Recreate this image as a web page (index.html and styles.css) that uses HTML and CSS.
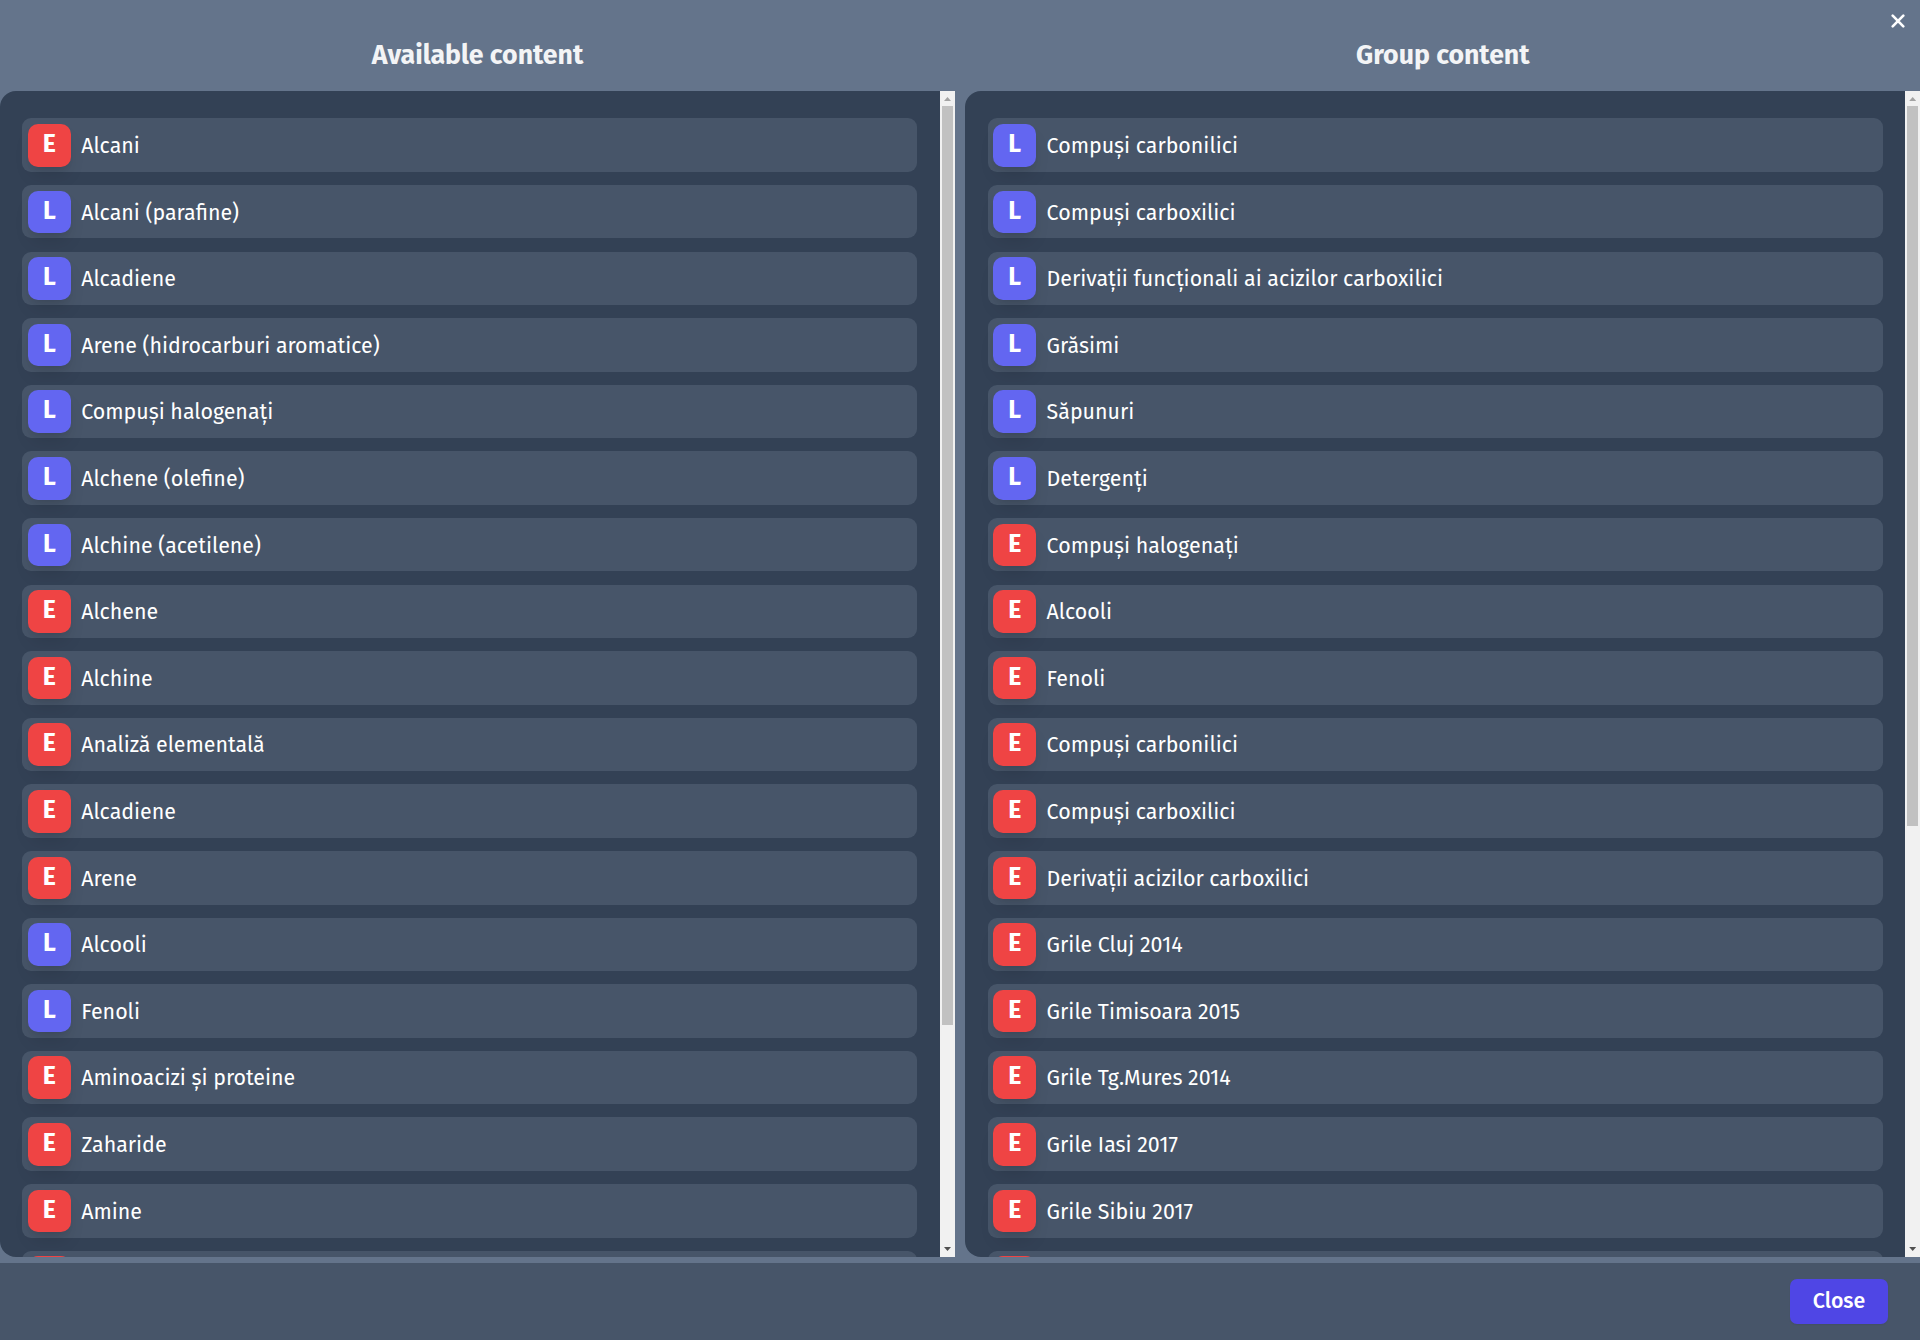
FILE: index.html
```
<!DOCTYPE html>
<html lang="ro">
<head>
<meta charset="utf-8">
<title>Group content</title>
<link rel="stylesheet" href="styles.css">
</head>
<body>
<main class="dialog">
  <button class="dismiss" aria-label="Close dialog"><svg viewBox="0 0 14 14" width="14" height="14"><path d="M1.7 1.7l10.6 10.6M12.3 1.7L1.7 12.3"/></svg></button>
  <div class="columns">
    <section class="column">
      <h2>Available content</h2>
      <div class="panel">
        <ul class="list">
          <li><b class="tag e">E</b><span>Alcani</span></li>
          <li><b class="tag l">L</b><span>Alcani (parafine)</span></li>
          <li><b class="tag l">L</b><span>Alcadiene</span></li>
          <li><b class="tag l">L</b><span>Arene (hidrocarburi aromatice)</span></li>
          <li><b class="tag l">L</b><span>Compuși halogenați</span></li>
          <li><b class="tag l">L</b><span>Alchene (olefine)</span></li>
          <li><b class="tag l">L</b><span>Alchine (acetilene)</span></li>
          <li><b class="tag e">E</b><span>Alchene</span></li>
          <li><b class="tag e">E</b><span>Alchine</span></li>
          <li><b class="tag e">E</b><span>Analiză elementală</span></li>
          <li><b class="tag e">E</b><span>Alcadiene</span></li>
          <li><b class="tag e">E</b><span>Arene</span></li>
          <li><b class="tag l">L</b><span>Alcooli</span></li>
          <li><b class="tag l">L</b><span>Fenoli</span></li>
          <li><b class="tag e">E</b><span>Aminoacizi și proteine</span></li>
          <li><b class="tag e">E</b><span>Zaharide</span></li>
          <li><b class="tag e">E</b><span>Amine</span></li>
          <li><b class="tag e"></b></li>
        </ul>
        <div class="scrollbar"><i class="up"></i><i class="thumb thumb-available"></i><i class="down"></i></div>
      </div>
    </section>
    <section class="column">
      <h2>Group content</h2>
      <div class="panel">
        <ul class="list">
          <li><b class="tag l">L</b><span>Compuși carbonilici</span></li>
          <li><b class="tag l">L</b><span>Compuși carboxilici</span></li>
          <li><b class="tag l">L</b><span>Derivații funcționali ai acizilor carboxilici</span></li>
          <li><b class="tag l">L</b><span>Grăsimi</span></li>
          <li><b class="tag l">L</b><span>Săpunuri</span></li>
          <li><b class="tag l">L</b><span>Detergenți</span></li>
          <li><b class="tag e">E</b><span>Compuși halogenați</span></li>
          <li><b class="tag e">E</b><span>Alcooli</span></li>
          <li><b class="tag e">E</b><span>Fenoli</span></li>
          <li><b class="tag e">E</b><span>Compuși carbonilici</span></li>
          <li><b class="tag e">E</b><span>Compuși carboxilici</span></li>
          <li><b class="tag e">E</b><span>Derivații acizilor carboxilici</span></li>
          <li><b class="tag e">E</b><span>Grile Cluj 2014</span></li>
          <li><b class="tag e">E</b><span>Grile Timisoara 2015</span></li>
          <li><b class="tag e">E</b><span>Grile Tg.Mures 2014</span></li>
          <li><b class="tag e">E</b><span>Grile Iasi 2017</span></li>
          <li><b class="tag e">E</b><span>Grile Sibiu 2017</span></li>
          <li><b class="tag e"></b></li>
        </ul>
        <div class="scrollbar"><i class="up"></i><i class="thumb thumb-group"></i><i class="down"></i></div>
      </div>
    </section>
  </div>
  <footer><button class="close">Close</button></footer>
</main>
</body>
</html>
```
FILE: styles.css
```
* { box-sizing: border-box; }
body { margin: 0; font-family: "Fira Sans", "Noto Sans", sans-serif; }
button { font-family: inherit; border: 0; padding: 0; }
.dialog { position: relative; width: 1920px; height: 1340px; overflow: hidden; background: #64748b; display: flex; flex-direction: column; }
.dismiss { position: absolute; right: 15px; top: 13px; width: 15px; height: 15px; background: none; display: flex; }
.dismiss svg { fill: none; stroke: #fff; stroke-width: 2.6; stroke-linecap: round; margin: auto; }
.columns { height: 1263px; padding-bottom: 6px; display: grid; grid-template-columns: 955px 954.8px; gap: 10.4px; }
.column { display: flex; flex-direction: column; min-height: 0; }
h2 { margin: 0; height: 91px; padding-top: 38px; line-height: 34px; text-align: center; font-size: 26.67px; font-weight: 700; color: #f3f4f6; }
.panel { height: 1166px; overflow: hidden; display: flex; background: #334155; border-radius: 16px 0 0 16px; }
.list { flex: 1; margin: 0; padding: 27.3px 22.6px 0 22.4px; list-style: none; display: flex; flex-direction: column; gap: 13.12px; }
.list li { flex: none; height: 53.5px; padding: 5.65px; display: flex; gap: 10.6px; border-radius: 9px; background: #475569; color: #fff; font-size: 21.38px; line-height: 44.1px; white-space: nowrap; }
.tag { flex: none; width: 42.6px; height: 42.6px; border-radius: 10px; text-align: center; font-size: 24.9px; line-height: 41.3px; box-shadow: 0 11px 17px -3px rgba(0,0,0,.1), 0 4px 7px -4px rgba(0,0,0,.1); }
.e { background: #ef4444; }
.l { background: #6366f1; }
.scrollbar { width: 15px; background: #f1f1f1; display: flex; flex-direction: column; align-items: center; }
.up, .down { flex: none; width: 15px; height: 15px; display: grid; place-items: start center; }
.up { padding-top: 6px; }
.down { padding-top: 5px; margin-top: auto; }
.up::before, .down::before { content: ""; width: 7px; height: 4px; }
.up::before { background: #a3a3a3; clip-path: polygon(50% 0, 100% 100%, 0 100%); }
.down::before { background: #505050; clip-path: polygon(0 0, 100% 0, 50% 100%); }
.thumb { width: 11px; background: #c1c1c1; }
.thumb-available { height: 919px; }
.thumb-group { height: 720px; }
footer { flex: 1; padding: 16px 32px; background: #475569; display: flex; justify-content: flex-end; }
.close { width: 98px; height: 45px; border-radius: 7px; background: #4f46e5; color: #fff; font-size: 21.33px; line-height: 43px; font-weight: 500; box-shadow: 0 1px 2px rgba(0,0,0,.06); }
```
